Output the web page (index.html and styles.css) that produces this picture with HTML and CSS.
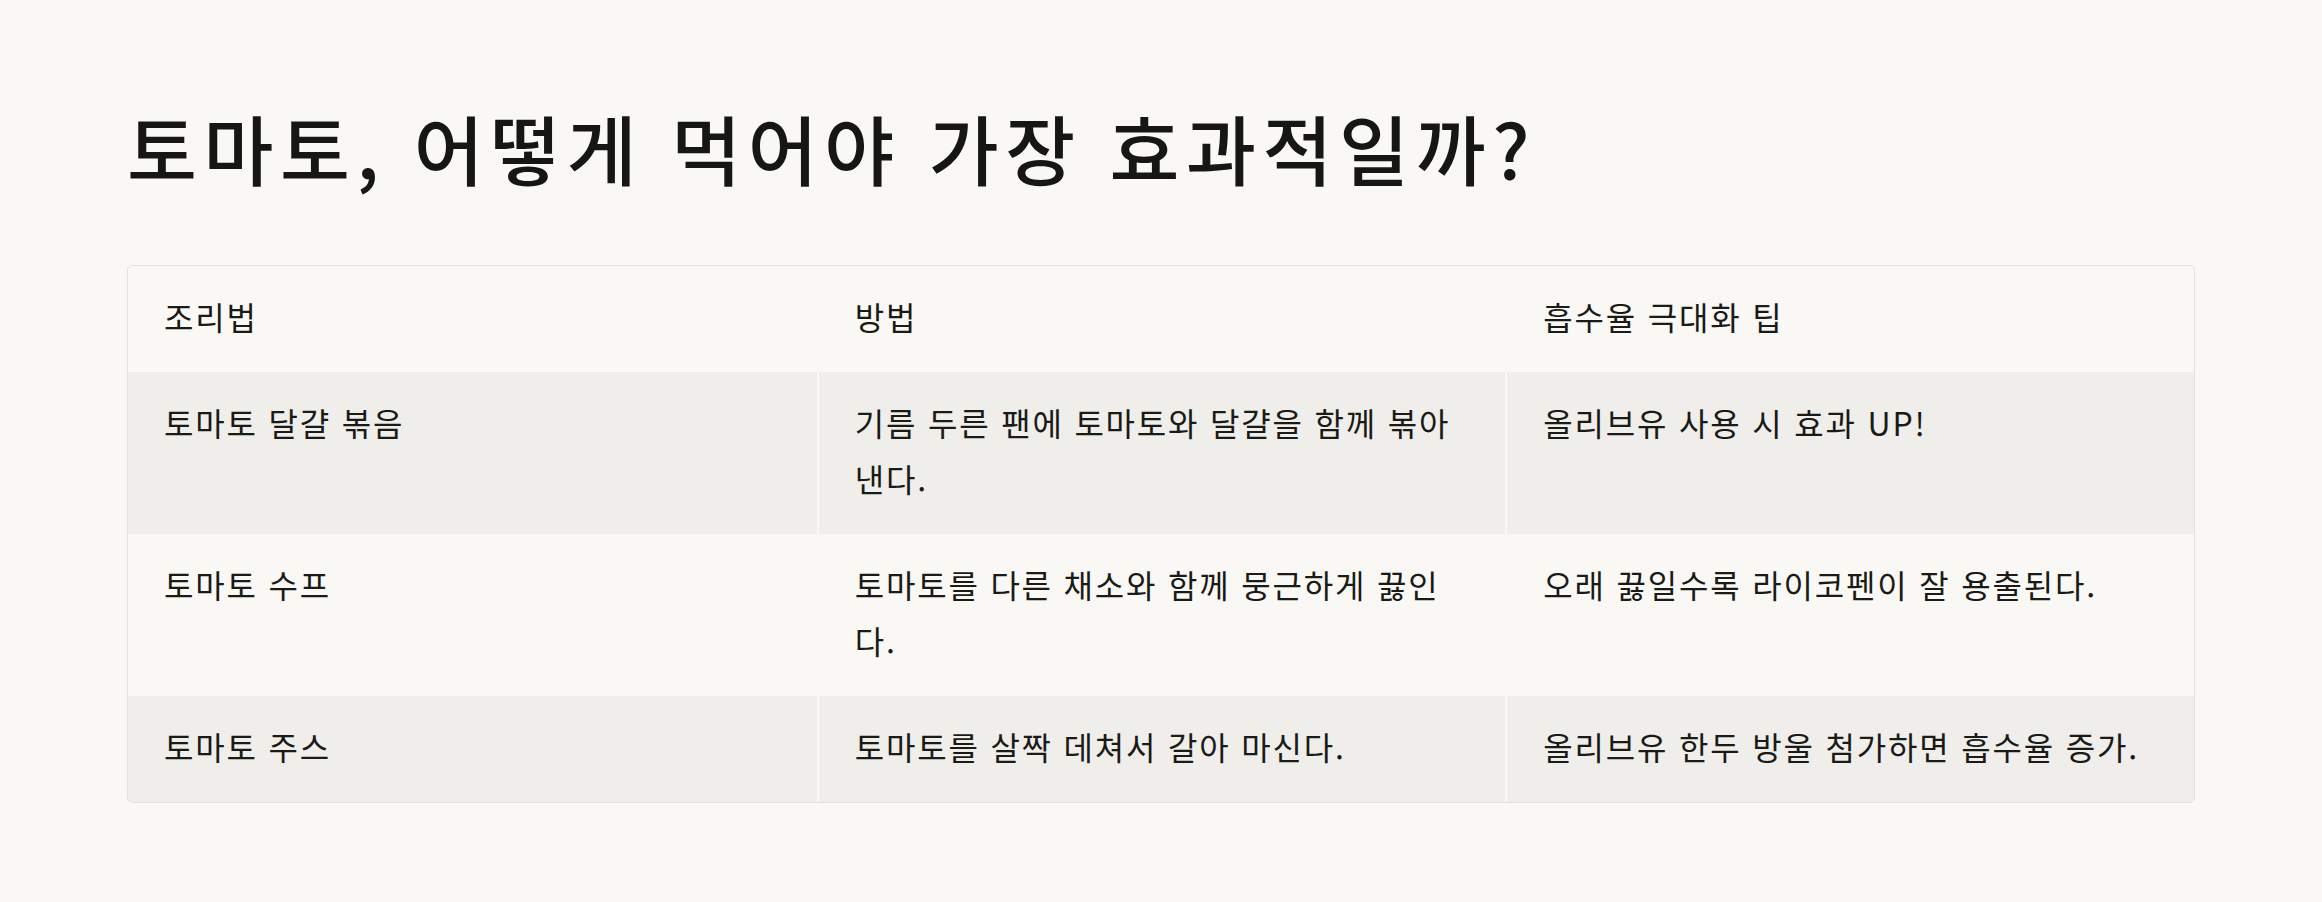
FILE: index.html
```html
<!DOCTYPE html>
<html lang="ko">
<head>
  <meta charset="UTF-8"/>
  <meta name="viewport" content="width=device-width, initial-scale=1.0"/>
  <title>토마토, 어떻게 먹어야 가장 효과적일까?</title>
  <link rel="stylesheet" href="styles.css">
</head>
<body>

  <!-- 제목 -->
  <main class="page">
    <h1 class="title">토마토, 어떻게 먹어야 가장 효과적일까?</h1>

    <!-- 조리법 표 -->
    <div class="table-wrap">
      <table class="recipe-table">
        <thead>
          <tr>
            <th>조리법</th>
            <th>방법</th>
            <th>흡수율 극대화 팁</th>
          </tr>
        </thead>
        <tbody>
          <tr>
            <td>토마토 달걀 볶음</td>
            <td>기름 두른 팬에 토마토와 달걀을 함께 볶아 낸다.</td>
            <td>올리브유 사용 시 효과 UP!</td>
          </tr>
          <tr>
            <td>토마토 수프</td>
            <td>토마토를 다른 채소와 함께 뭉근하게 끓인다.</td>
            <td>오래 끓일수록 라이코펜이 잘 용출된다.</td>
          </tr>
          <tr>
            <td>토마토 주스</td>
            <td>토마토를 살짝 데쳐서 갈아 마신다.</td>
            <td>올리브유 한두 방울 첨가하면 흡수율 증가.</td>
          </tr>
        </tbody>
      </table>
    </div>
  </main>

</body>
</html>
```

FILE: styles.css
```css
* {
  margin: 0; padding: 0;
  box-sizing: border-box;
}

body {
  font-family: "Noto Sans CJK KR", "Noto Sans", sans-serif;
  background: #f9f8f5;
  color: #1a1a16;
  min-height: 100vh;
}

.page {
  padding: 102px 127px 0;
}

.title {
  font-size: 76px;
  font-weight: 500;
  line-height: 1.2;
  color: #161612;
  margin-bottom: 72px;
  letter-spacing: 6.6px;
}

.table-wrap {
  border: 1px solid #e3e1dc;
  border-radius: 5px;
  overflow: hidden;
}

.recipe-table {
  width: 100%;
  border-collapse: separate;
  border-spacing: 0;
  table-layout: fixed;
  font-size: 32px;
  line-height: 56px;
  letter-spacing: 1.8px;
}

.recipe-table th,
.recipe-table td {
  text-align: left;
  font-weight: 400;
  padding: 22px 36px 28px;
  vertical-align: top;
}

.recipe-table td + td {
  border-left: 2px solid #f9f8f5;
}

.recipe-table th + th {
  border-left: 2px solid transparent;
}

.recipe-table tbody tr:nth-child(odd) {
  background: #efeeeb;
}
```
